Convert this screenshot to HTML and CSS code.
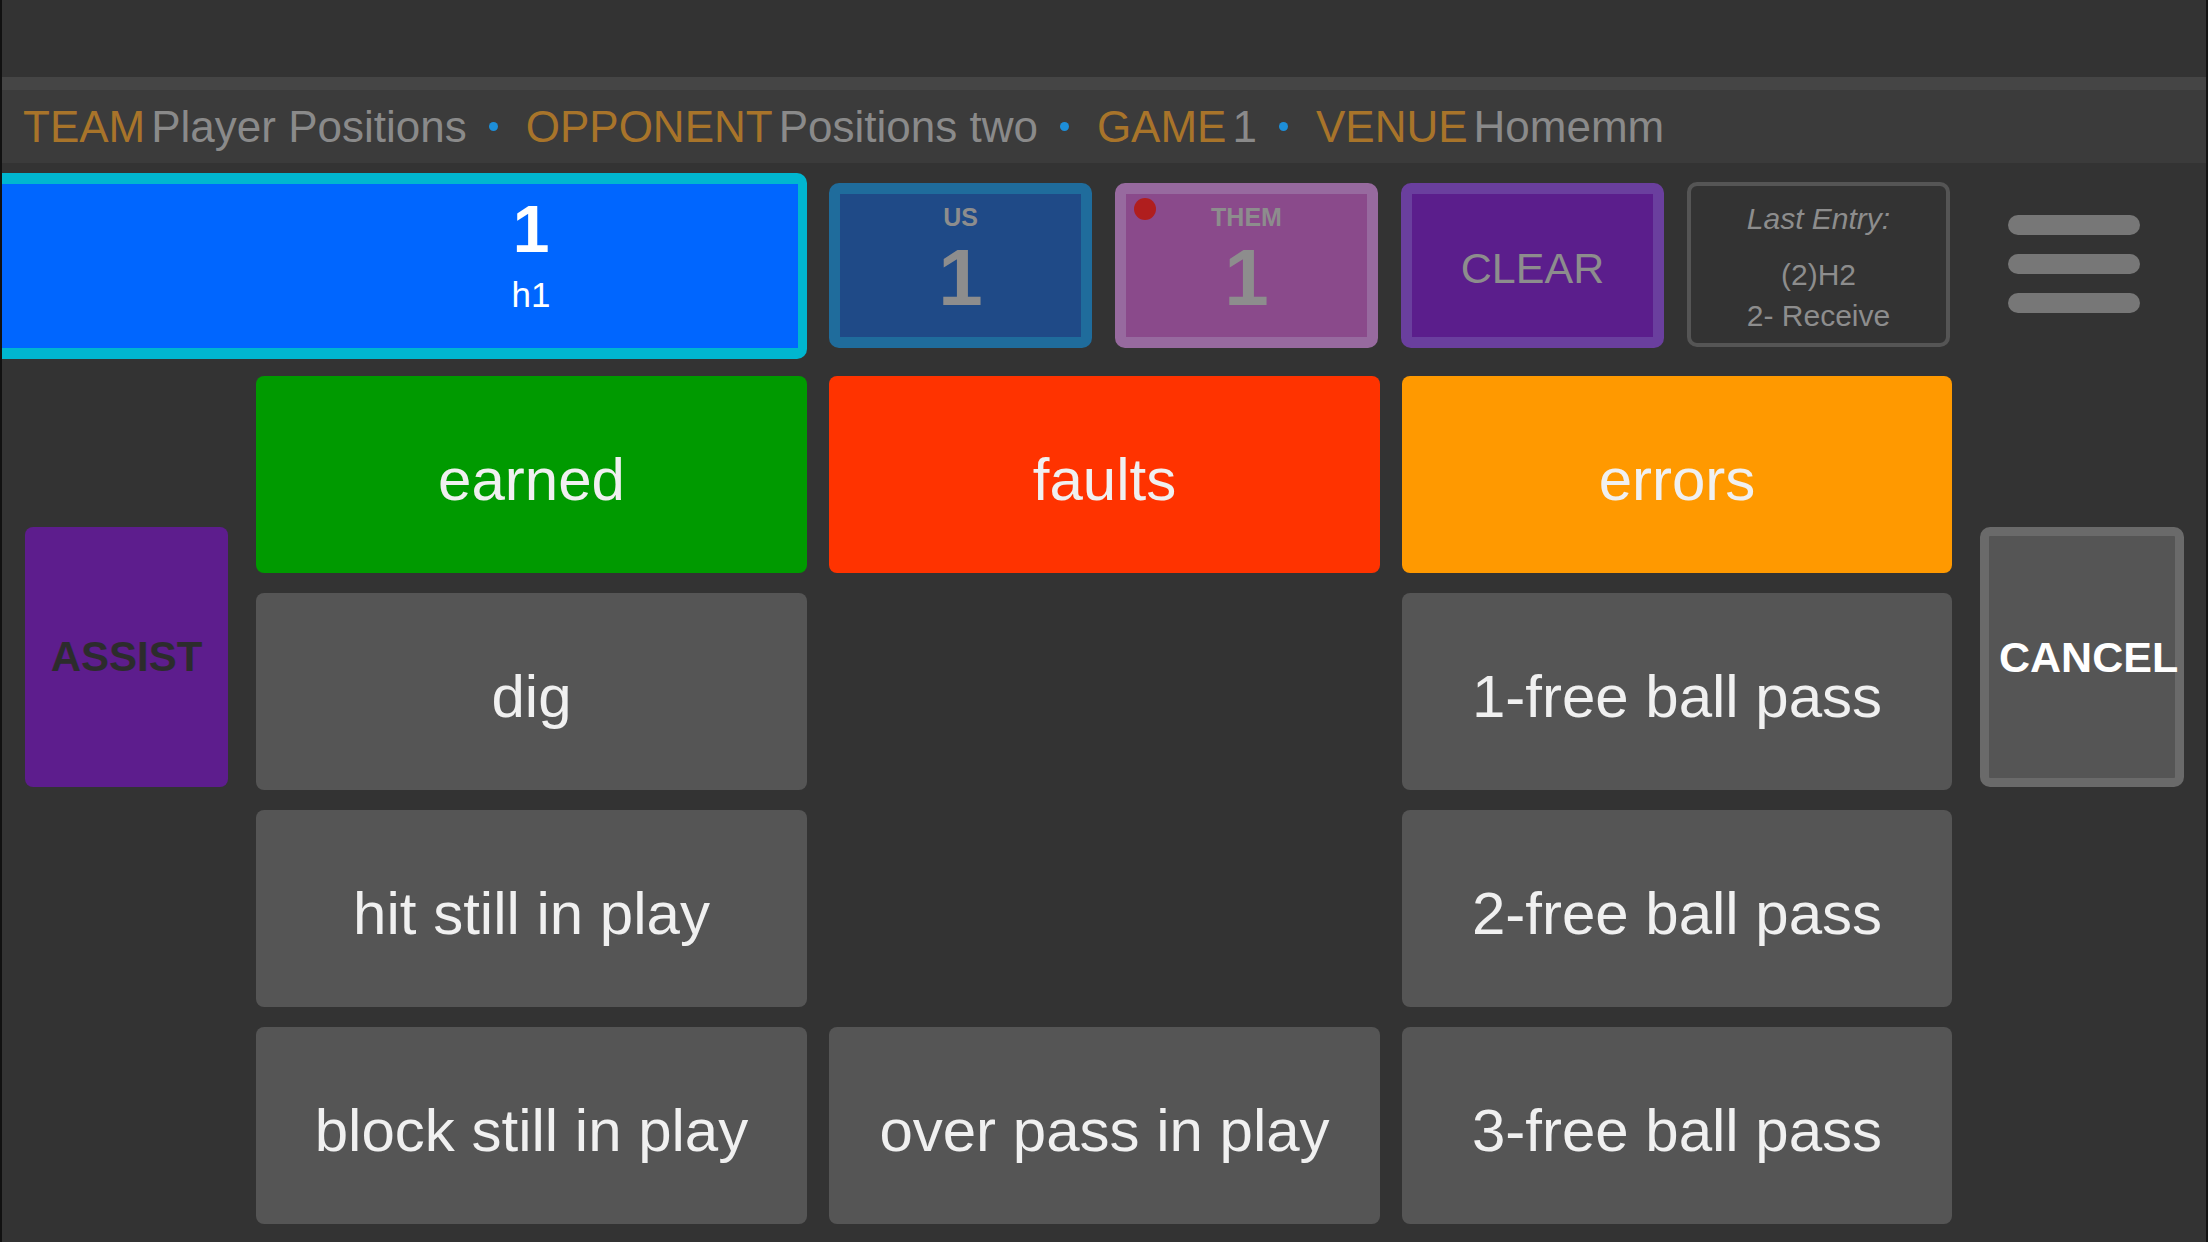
FILE: index.html
```html
<!DOCTYPE html>
<html lang="en">
<head>
    <meta charset="UTF-8">
    <meta name="viewport" content="width=device-width, initial-scale=1.0">
    <title>Stat Entry</title>
    <link rel="stylesheet" href="styles.css">
</head>
<body>
    <div class="screen">
        <div class="status-bar"></div>
        <div class="match-info">
            <span class="label">TEAM</span><span class="value">Player Positions</span>
            <span class="dot"></span>
            <span class="label">OPPONENT</span><span class="value">Positions two</span>
            <span class="dot"></span>
            <span class="label">GAME</span><span class="value">1</span>
            <span class="dot"></span>
            <span class="label">VENUE</span><span class="value">Homemm</span>
        </div>

        <div class="top-row">
            <div class="player">
                <div class="player-num">1</div>
                <div class="player-name">h1</div>
            </div>
            <div class="tile score us">
                <div class="score-label">US</div>
                <div class="score-num">1</div>
            </div>
            <div class="tile score them">
                <span class="serve"></span>
                <div class="score-label">THEM</div>
                <div class="score-num">1</div>
            </div>
            <div class="tile clear">CLEAR</div>
            <div class="tile last-entry">
                <div class="last-title">Last Entry:</div>
                <div class="last-line first">(2)H2</div>
                <div class="last-line">2- Receive</div>
            </div>
            <div class="menu">
                <span></span>
                <span></span>
                <span></span>
            </div>
        </div>

        <div class="actions">
            <button class="side assist">ASSIST</button>
            <button class="act earned">earned</button>
            <button class="act faults">faults</button>
            <button class="act errors">errors</button>
            <button class="side cancel">CANCEL</button>

            <button class="act col2">dig</button>
            <button class="act col4">1-free ball pass</button>

            <button class="act col2">hit still in play</button>
            <button class="act col4">2-free ball pass</button>

            <button class="act col2">block still in play</button>
            <button class="act col3">over pass in play</button>
            <button class="act col4">3-free ball pass</button>
        </div>
    </div>
</body>
</html>
```

FILE: styles.css
```css
/* Basic Styling */
body {
    margin: 0;
    padding: 0;
    background: #333333;
    font-family: Arial, Helvetica, "Liberation Sans", sans-serif;
    overflow: hidden;
}
.screen {
    width: 2208px;
    height: 1242px;
    box-sizing: border-box;
    border-left: 2px solid #111;
    border-right: 2px solid #141414;
    background: #333333;
}
.status-bar {
    height: 77px;
    background: #333333;
    border-bottom: 13px solid #454545;
}

/* match header */
.match-info {
    height: 73px;
    background: #3b3b3b;
    display: flex;
    align-items: center;
    padding-left: 21px;
    font-size: 44px;
    white-space: nowrap;
}
.label {
    color: #a8742a;
    margin-right: 6px;
}
.value {
    color: #8a8a8a;
}
.dot {
    width: 9px;
    height: 9px;
    border-radius: 50%;
    background: #1d8ed8;
    margin: 0 28px 0 22px;
}

/* top row */
.top-row {
    display: flex;
    align-items: flex-start;
    padding-top: 10px;
}
.player {
    height: 164px;
    background: #0066ff;
    border: 11px solid #00b6d0;
    border-left: none;
    border-right-width: 9px;
    border-radius: 0 10px 10px 0;
    padding-left: 262px;
    width: 534px;
    color: #fff;
    text-align: center;
}
.player-num {
    font-size: 66px;
    font-weight: bold;
    line-height: 66px;
    margin-top: 12px;
}
.player-name {
    font-size: 35px;
    line-height: 40px;
    margin-top: 13px;
}
.tile {
    width: 263px;
    height: 165px;
    box-sizing: border-box;
    border-radius: 10px;
    margin-top: 10px;
    margin-left: 23px;
    color: #8d8d8d;
    text-align: center;
    position: relative;
}
.player + .tile {
    margin-left: 22px;
}
.score {
    border: 11px solid;
    padding-top: 8px;
    font-weight: bold;
}
.us {
    background: #1f4a87;
    border-color: #1f6c9c;
}
.them {
    background: #8a4a8b;
    border-color: #976a9f;
}
.score-label {
    font-size: 25px;
    line-height: 30px;
}
.score-num {
    font-size: 80px;
    line-height: 80px;
    margin-top: 6px;
}
.serve {
    position: absolute;
    left: 8px;
    top: 4px;
    width: 22px;
    height: 22px;
    border-radius: 50%;
    background: #b01e1e;
}
.clear {
    background: #5b1e8c;
    border: 11px solid #6a3f9e;
    font-size: 43px;
    display: flex;
    align-items: center;
    justify-content: center;
    padding-top: 5px;
}
.last-entry {
    border: 4px solid #555;
    margin-top: 9px;
    padding-top: 13px;
    font-size: 30px;
}
.last-title {
    font-style: italic;
    line-height: 40px;
}
.last-line {
    line-height: 41px;
}
.last-line.first {
    margin-top: 15px;
}
.menu {
    margin: 42px 0 0 58px;
    width: 132px;
    display: flex;
    flex-direction: column;
    gap: 19px;
}
.menu span {
    height: 20px;
    border-radius: 10px;
    background: #777;
}

/* action grid */
.actions {
    display: grid;
    grid-template-columns: 209px 551px 551px 550px 212px;
    grid-template-rows: repeat(4, 197px);
    column-gap: 22px;
    row-gap: 20px;
    padding-left: 23px;
    margin-top: 17px;
}
button {
    font-family: Arial, Helvetica, "Liberation Sans", sans-serif;
    border: none;
    margin: 0;
    padding: 0;
    cursor: pointer;
}
.act {
    background: #555555;
    color: #f0f0f0;
    font-size: 60px;
    border-radius: 8px;
    padding-top: 10px;
}
.earned { background: #009a00; }
.faults { background: #ff3300; }
.errors { background: #ff9900; }
.col2 { grid-column: 2; }
.col3 { grid-column: 3; }
.col4 { grid-column: 4; }
.side {
    grid-row: 1 / span 2;
    align-self: end;
    height: 260px;
    margin-bottom: 3px;
    font-size: 42px;
    font-weight: bold;
    border-radius: 8px;
    white-space: nowrap;
}
.assist {
    grid-column: 1;
    width: 203px;
    background: #5d1d8d;
    color: #2c2c2c;
}
.cancel {
    grid-column: 5;
    justify-self: end;
    width: 204px;
    margin-right: 2px;
    padding-left: 10px;
    background: #555555;
    border: 9px solid #6a6a6a;
    border-radius: 10px;
    color: #fff;
    font-size: 43px;
}
```
